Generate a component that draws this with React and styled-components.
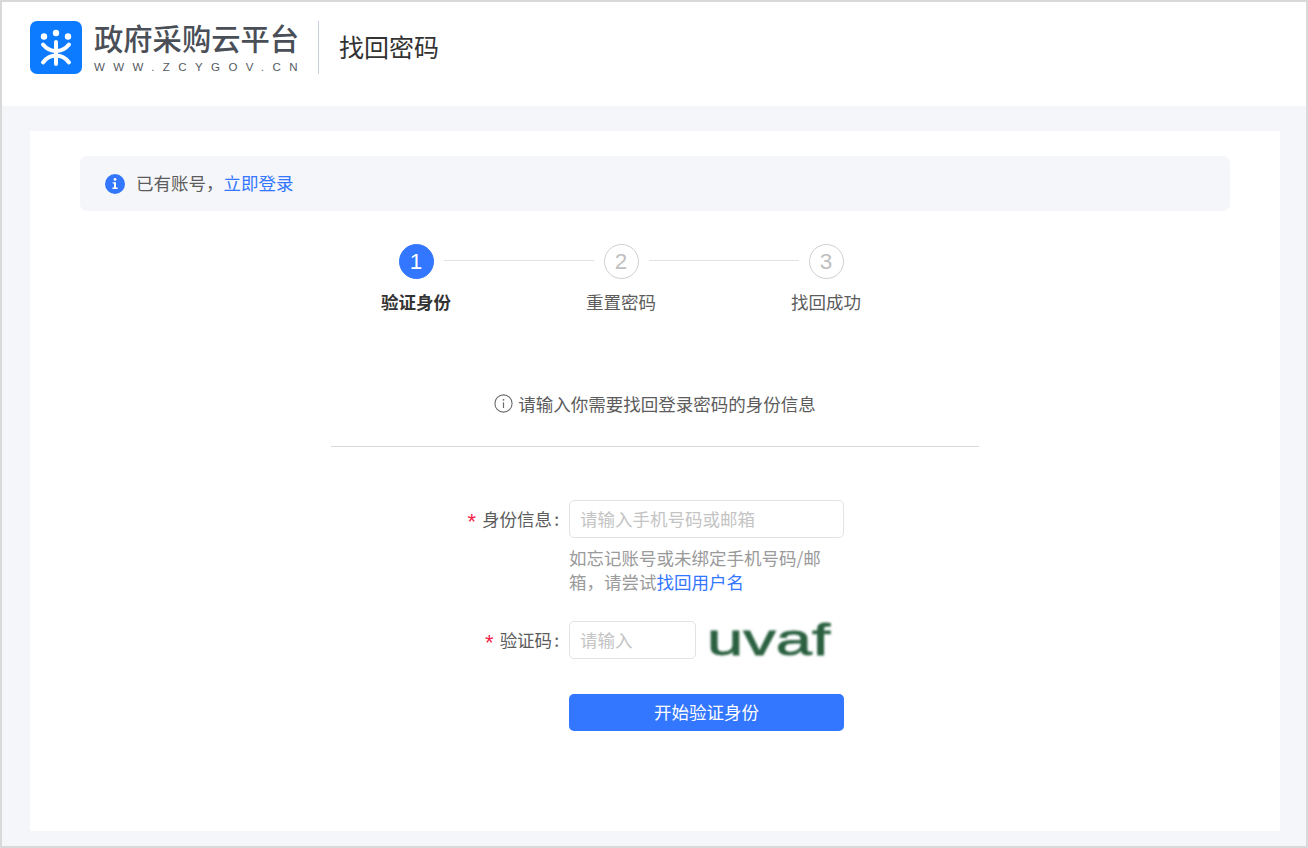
import React from "react";
import styled, { createGlobalStyle } from "styled-components";

const Global = createGlobalStyle`
  html, body { margin: 0; padding: 0; }
  body { font-family: "Noto Sans CJK SC", "Noto Sans", sans-serif; }
  * { box-sizing: border-box; }
`;

const Frame = styled.div`
  width: 1308px;
  height: 848px;
  border: 2px solid #d9d9d9;
  background: #f5f6fa;
  display: flex;
  flex-direction: column;
  overflow: hidden;
`;

const Header = styled.header`
  height: 104px;
  flex: none;
  background: #fff;
  display: flex;
  align-items: flex-start;
  padding: 19px 0 0 28px;
`;

const Brand = styled.div`
  display: flex;
  flex-direction: column;
  margin-left: 12px;
  width: 206px;
`;

const BrandName = styled.div`
  font-size: 29.3px;
  line-height: 36px;
  margin-top: -2px;
  font-weight: 500;
  color: #4a4e57;
  white-space: nowrap;
`;

const BrandUrl = styled.div`
  font-family: "Liberation Sans", sans-serif;
  font-size: 11.5px;
  line-height: 14px;
  margin-top: 5px;
  letter-spacing: 8.42px;
  color: #55595f;
  white-space: nowrap;
`;

const HeaderDivider = styled.div`
  width: 1px;
  height: 53px;
  margin: 0 20px 0 18px;
  background: #c5cfdf;
`;

const PageTitle = styled.h1`
  margin: 7px 0 0;
  font-size: 25px;
  line-height: 36px;
  font-weight: 400;
  color: #333;
`;

const Main = styled.main`
  flex: 1;
  padding: 25px 26px 15px 28px;
  display: flex;
`;

const Card = styled.section`
  flex: 1;
  background: #fff;
  padding: 25px 50px 0;
  display: flex;
  flex-direction: column;
`;

const Alert = styled.div`
  height: 55px;
  flex: none;
  background: #f5f6fa;
  border-radius: 7px;
  padding-left: 25px;
  display: flex;
  align-items: center;
  gap: 11px;
  font-size: 17.5px;
  color: #5c5c5c;
`;

const AlertText = styled.span`
  margin-top: -2px;
`;

const Link = styled.a`
  color: #3376ff;
  text-decoration: none;
`;

const StepTrack = styled.div`
  display: flex;
  align-items: flex-start;
  gap: 10px;
  margin: 33px 0 0 319px;
`;

const StepCircle = styled.div`
  width: 35px;
  height: 35px;
  flex: none;
  border-radius: 50%;
  padding-right: 1px;
  display: flex;
  align-items: center;
  justify-content: center;
  font-family: "Liberation Sans", sans-serif;
  font-size: 22.5px;
  color: ${(p) => (p.$active ? "#fff" : "#bfbfbf")};
  background: ${(p) => (p.$active ? "#3376ff" : "#fff")};
  border: 1px solid ${(p) => (p.$active ? "#3376ff" : "#cfcfcf")};
`;

const StepLine = styled.div`
  width: 150px;
  height: 1px;
  margin-top: 16px;
  background: #e2e2e2;
`;

const StepLabels = styled.div`
  display: grid;
  grid-template-columns: repeat(3, 205px);
  margin: 10px 0 0 233.5px;
`;

const StepLabel = styled.div`
  text-align: center;
  font-size: 17.5px;
  line-height: 26px;
  font-weight: ${(p) => (p.$active ? 700 : 400)};
  color: ${(p) => (p.$active ? "#333" : "#5c5c5c")};
`;

const Notice = styled.div`
  margin-top: 75px;
  display: flex;
  justify-content: center;
  align-items: center;
  gap: 5px;
  height: 26px;
  font-size: 17.5px;
  color: #5c5c5c;
`;

const Rule = styled.hr`
  width: 648px;
  height: 1px;
  margin: 30px auto 0;
  border: 0;
  background: #d9d9d9;
`;

const Form = styled.form`
  margin: 53px 0 0 250px;
  display: grid;
  grid-template-columns: 239px 275px;
`;

const Label = styled.label`
  height: 38px;
  padding: 0 10px 2px 0;
  display: flex;
  align-items: center;
  justify-content: flex-end;
  font-size: 17.5px;
  color: #5c5c5c;
`;

const Star = styled.span`
  color: #f5224a;
  font-family: "Liberation Sans", sans-serif;
  font-size: 22px;
  margin-right: 6px;
  padding-top: 7px;
`;

const Colon = styled.span`
  margin-left: 2px;
`;

const Field = styled.input`
  display: block;
  width: ${(p) => p.$width || "100%"};
  height: 38px;
  border: 1px solid #e3e3e3;
  border-radius: 5px;
  padding: 0 10px 2px;
  outline: none;
  background: #fff;
  font-family: inherit;
  font-size: 17.5px;
  color: #333;
  &::placeholder { color: #c4c4c4; opacity: 1; }
`;

const Hint = styled.div`
  margin-top: 8px;
  font-size: 17.5px;
  line-height: 24px;
  color: #9a9a9a;
`;

const Spacer = styled.div``;

const CaptchaRow = styled.div`
  height: 38px;
  display: flex;
  align-items: center;
  gap: 11px;
`;

const SubmitButton = styled.button`
  width: 275px;
  height: 37px;
  border: 0;
  border-radius: 5px;
  background: #3376ff;
  color: #fff;
  font-family: inherit;
  font-size: 17.5px;
  padding: 0 0 3px;
`;

const RowGap = styled.div`
  grid-column: 1 / -1;
  height: ${(p) => p.$h}px;
`;

const CaptchaImage = styled.svg`
  flex: none;
`;

const Logo = () => (
  <svg width="52" height="53" viewBox="0 0 52 53">
    <rect width="52" height="53" rx="7" fill="#0c7bff" />
    <circle cx="14" cy="15.5" r="3.2" fill="#fff" />
    <circle cx="26" cy="12" r="3.2" fill="#fff" />
    <circle cx="38" cy="15.5" r="3.2" fill="#fff" />
    <g fill="none" stroke="#fff" strokeWidth="4" strokeLinecap="round">
      <path d="M13 23.5 C17 28.5 21 30 26 30 C31 30 35 28.5 39 23.5" />
      <path d="M26 21 V43" />
      <path d="M13 41.5 C17 36 21 34.5 26 34.5 C31 34.5 35 36 39 41.5" />
    </g>
  </svg>
);

const FilledInfo = () => (
  <svg width="20" height="20" viewBox="0 0 20 20">
    <circle cx="10" cy="10" r="10" fill="#3376ff" />
    <circle cx="10" cy="5.4" r="1.4" fill="#fff" />
    <path d="M7.6 8.2 H11 V13.6 H12.6 V15 H7.4 V13.6 H9 V9.6 H7.6 Z" fill="#fff" />
  </svg>
);

const OutlineInfo = () => (
  <svg width="19" height="19" viewBox="0 0 19 19">
    <circle cx="9.5" cy="9.5" r="8.6" fill="none" stroke="#6b6b6b" strokeWidth="1.1" />
    <circle cx="9.5" cy="5.8" r="0.9" fill="#6b6b6b" />
    <path d="M9.5 8.4 V14" stroke="#6b6b6b" strokeWidth="1.2" />
  </svg>
);

const Captcha = () => (
  <CaptchaImage width="128" height="44" viewBox="0 0 128 44">
    <defs>
      <filter id="soft" x="-5%" y="-10%" width="110%" height="120%">
        <feGaussianBlur stdDeviation="0.8" />
      </filter>
    </defs>
    <text
      x="0"
      y="37"
      textLength="123"
      lengthAdjust="spacingAndGlyphs"
      fontFamily="Liberation Sans, sans-serif"
      fontSize="45"
      fill="#2a6140"
      stroke="#2a6140"
      strokeWidth="0.8"
      filter="url(#soft)"
    >
      uvaf
    </text>
  </CaptchaImage>
);

export default function App() {
  return (
    <>
      <Global />
      <Frame>
        <Header>
          <Logo />
          <Brand>
            <BrandName>政府采购云平台</BrandName>
            <BrandUrl>WWW.ZCYGOV.CN</BrandUrl>
          </Brand>
          <HeaderDivider />
          <PageTitle>找回密码</PageTitle>
        </Header>
        <Main>
          <Card>
            <Alert>
              <FilledInfo />
              <AlertText>
                已有账号，<Link href="#">立即登录</Link>
              </AlertText>
            </Alert>
            <StepTrack>
              <StepCircle $active>1</StepCircle>
              <StepLine />
              <StepCircle>2</StepCircle>
              <StepLine />
              <StepCircle>3</StepCircle>
            </StepTrack>
            <StepLabels>
              <StepLabel $active>验证身份</StepLabel>
              <StepLabel>重置密码</StepLabel>
              <StepLabel>找回成功</StepLabel>
            </StepLabels>
            <Notice>
              <OutlineInfo />
              <span>请输入你需要找回登录密码的身份信息</span>
            </Notice>
            <Rule />
            <Form onSubmit={(e) => e.preventDefault()}>
              <Label>
                <Star>*</Star>身份信息<Colon>:</Colon>
              </Label>
              <Field placeholder="请输入手机号码或邮箱" />
              <Spacer />
              <Hint>
                如忘记账号或未绑定手机号码/邮箱，请尝试<Link href="#">找回用户名</Link>
              </Hint>
              <RowGap $h={27} />
              <Label>
                <Star>*</Star>验证码<Colon>:</Colon>
              </Label>
              <CaptchaRow>
                <Field $width="127px" placeholder="请输入" />
                <Captcha />
              </CaptchaRow>
              <RowGap $h={35} />
              <Spacer />
              <SubmitButton type="submit">开始验证身份</SubmitButton>
            </Form>
          </Card>
        </Main>
      </Frame>
    </>
  );
}
